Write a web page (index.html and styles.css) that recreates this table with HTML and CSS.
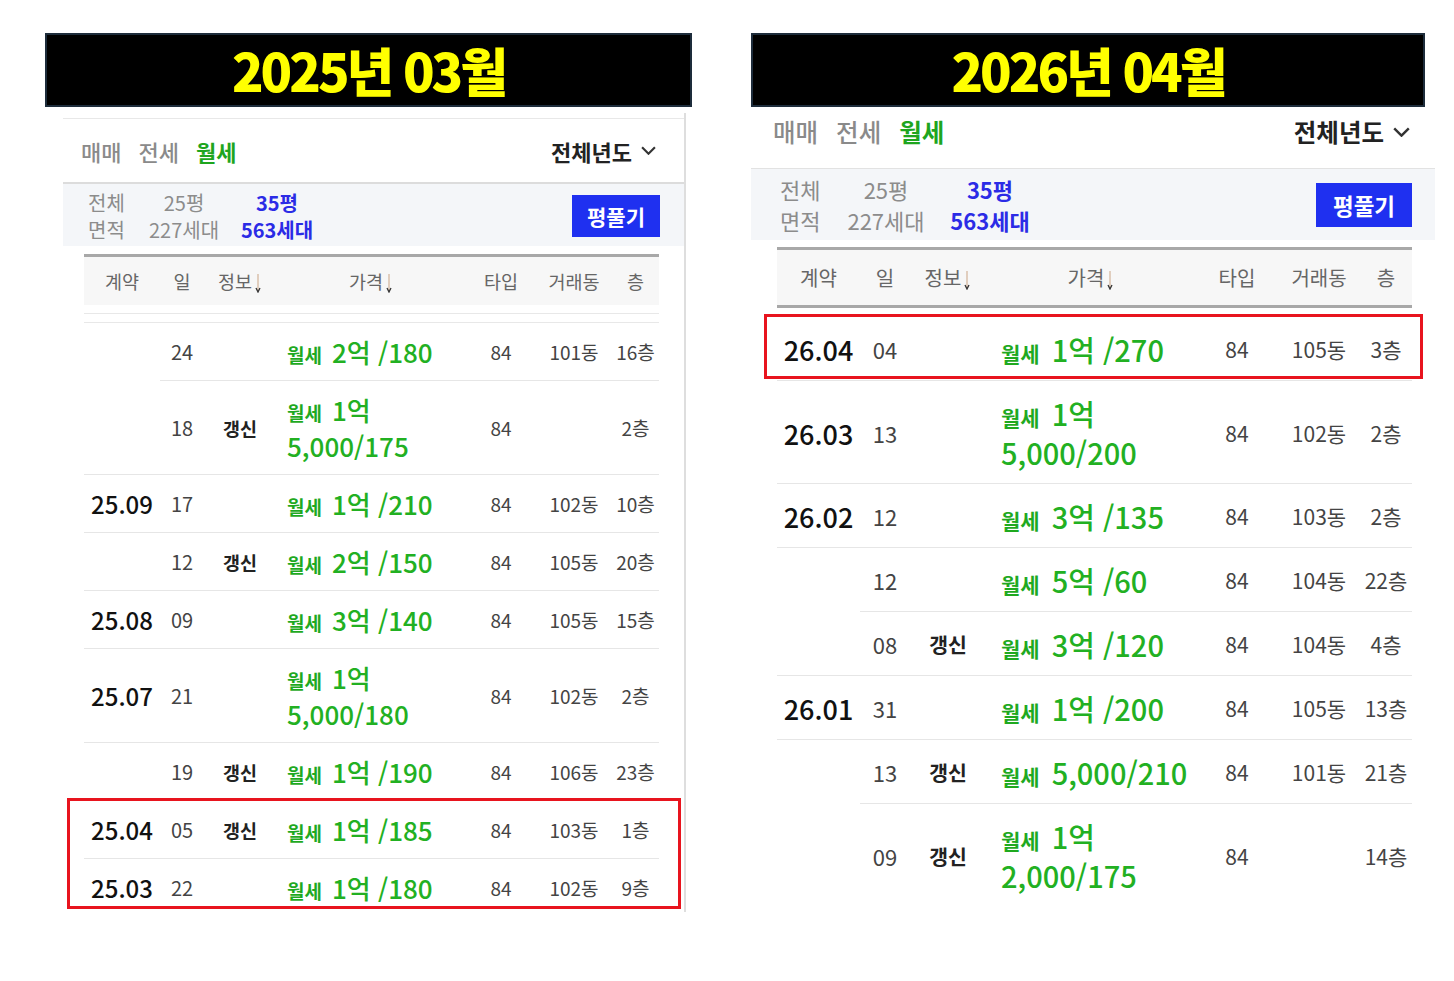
FILE: index.html
```html
<!DOCTYPE html>
<html lang="ko">
<head>
<meta charset="utf-8">
<title>월세 실거래가 비교</title>
<link rel="stylesheet" href="styles.css">
</head>
<body>
<main class="page">
  <section class="shot shot-a">
    <h1 class="title">2025년 03월</h1>
    <div class="app">
      <div class="tabs">
        <div class="deal-types"><span>매매</span><span>전세</span><span class="on">월세</span></div>
        <div class="year">전체년도<svg class="chev" viewBox="0 0 14 8"><polyline points="1,1 7,7 13,1"/></svg></div>
      </div>
      <div class="area">
        <div class="area-grid">
          <span class="lbl">전체</span><span class="opt">25평</span><span class="opt sel">35평</span>
          <span class="lbl">면적</span><span class="opt">227세대</span><span class="opt sel">563세대</span>
        </div>
        <button class="btn">평풀기</button>
      </div>
      <div class="table">
        <div class="thead">
          <span>계약</span><span>일</span>
          <span>정보<svg class="arr" viewBox="0 0 8 20"><path class="s" d="M4 1V18"/><path class="h" d="M2 15L4 19L6 15"/></svg></span>
          <span>가격<svg class="arr" viewBox="0 0 8 20"><path class="s" d="M4 1V18"/><path class="h" d="M2 15L4 19L6 15"/></svg></span>
          <span>타입</span><span>거래동</span><span>층</span>
        </div>
        <div class="cut"></div>
        <div class="tr short"><span class="m"></span><span class="d">24</span><span class="i"></span><span class="p"><b>월세</b>2억 /180</span><span class="o">84</span><span class="o">101동</span><span class="o">16층</span></div>
        <div class="tr"><span class="m"></span><span class="d">18</span><span class="i">갱신</span><span class="p"><b>월세</b>1억<br>5,000/175</span><span class="o">84</span><span class="o"></span><span class="o">2층</span></div>
        <div class="tr"><span class="m">25.09</span><span class="d">17</span><span class="i"></span><span class="p"><b>월세</b>1억 /210</span><span class="o">84</span><span class="o">102동</span><span class="o">10층</span></div>
        <div class="tr"><span class="m"></span><span class="d">12</span><span class="i">갱신</span><span class="p"><b>월세</b>2억 /150</span><span class="o">84</span><span class="o">105동</span><span class="o">20층</span></div>
        <div class="tr"><span class="m">25.08</span><span class="d">09</span><span class="i"></span><span class="p"><b>월세</b>3억 /140</span><span class="o">84</span><span class="o">105동</span><span class="o">15층</span></div>
        <div class="tr"><span class="m">25.07</span><span class="d">21</span><span class="i"></span><span class="p"><b>월세</b>1억<br>5,000/180</span><span class="o">84</span><span class="o">102동</span><span class="o">2층</span></div>
        <div class="tr"><span class="m"></span><span class="d">19</span><span class="i">갱신</span><span class="p"><b>월세</b>1억 /190</span><span class="o">84</span><span class="o">106동</span><span class="o">23층</span></div>
        <div class="hl">
          <div class="tr"><span class="m">25.04</span><span class="d">05</span><span class="i">갱신</span><span class="p"><b>월세</b>1억 /185</span><span class="o">84</span><span class="o">103동</span><span class="o">1층</span></div>
          <div class="tr last"><span class="m">25.03</span><span class="d">22</span><span class="i"></span><span class="p"><b>월세</b>1억 /180</span><span class="o">84</span><span class="o">102동</span><span class="o">9층</span></div>
        </div>
      </div>
    </div>
  </section>

  <section class="shot shot-b">
    <h1 class="title">2026년 04월</h1>
    <div class="app">
      <div class="tabs">
        <div class="deal-types"><span>매매</span><span>전세</span><span class="on">월세</span></div>
        <div class="year">전체년도<svg class="chev" viewBox="0 0 14 8"><polyline points="1,1 7,7 13,1"/></svg></div>
      </div>
      <div class="area">
        <div class="area-grid">
          <span class="lbl">전체</span><span class="opt">25평</span><span class="opt sel">35평</span>
          <span class="lbl">면적</span><span class="opt">227세대</span><span class="opt sel">563세대</span>
        </div>
        <button class="btn">평풀기</button>
      </div>
      <div class="table">
        <div class="thead">
          <span>계약</span><span>일</span>
          <span>정보<svg class="arr" viewBox="0 0 8 20"><path class="s" d="M4 1V18"/><path class="h" d="M2 15L4 19L6 15"/></svg></span>
          <span>가격<svg class="arr" viewBox="0 0 8 20"><path class="s" d="M4 1V18"/><path class="h" d="M2 15L4 19L6 15"/></svg></span>
          <span>타입</span><span>거래동</span><span>층</span>
        </div>
        <div class="cut"></div>
        <div class="hl">
          <div class="tr"><span class="m">26.04</span><span class="d">04</span><span class="i"></span><span class="p"><b>월세</b>1억 /270</span><span class="o">84</span><span class="o">105동</span><span class="o">3층</span></div>
        </div>
        <div class="tr"><span class="m">26.03</span><span class="d">13</span><span class="i"></span><span class="p"><b>월세</b>1억<br>5,000/200</span><span class="o">84</span><span class="o">102동</span><span class="o">2층</span></div>
        <div class="tr"><span class="m">26.02</span><span class="d">12</span><span class="i"></span><span class="p"><b>월세</b>3억 /135</span><span class="o">84</span><span class="o">103동</span><span class="o">2층</span></div>
        <div class="tr short"><span class="m"></span><span class="d">12</span><span class="i"></span><span class="p"><b>월세</b>5억 /60</span><span class="o">84</span><span class="o">104동</span><span class="o">22층</span></div>
        <div class="tr"><span class="m"></span><span class="d">08</span><span class="i">갱신</span><span class="p"><b>월세</b>3억 /120</span><span class="o">84</span><span class="o">104동</span><span class="o">4층</span></div>
        <div class="tr"><span class="m">26.01</span><span class="d">31</span><span class="i"></span><span class="p"><b>월세</b>1억 /200</span><span class="o">84</span><span class="o">105동</span><span class="o">13층</span></div>
        <div class="tr short"><span class="m"></span><span class="d">13</span><span class="i">갱신</span><span class="p"><b>월세</b>5,000/210</span><span class="o">84</span><span class="o">101동</span><span class="o">21층</span></div>
        <div class="tr last"><span class="m"></span><span class="d">09</span><span class="i">갱신</span><span class="p"><b>월세</b>1억<br>2,000/175</span><span class="o">84</span><span class="o"></span><span class="o">14층</span></div>
      </div>
    </div>
  </section>
</main>
</body>
</html>
```

FILE: styles.css
```css
* { box-sizing: border-box; margin: 0; padding: 0; }

html, body { background: #fff; }

body {
  font-family: "Noto Sans CJK KR", "Noto Sans", sans-serif;
  color: #333;
}

.page {
  display: flex;
  align-items: flex-start;
  padding-top: 33px;
  height: 981px;
  overflow: hidden;
}

.shot { display: flex; flex-direction: column; }

.shot-a {
  margin-left: 45px;
  width: 647px;
  --cols: 76px 44px 72px 190px 70px 76px 47px;
  --mw: 76px;
  --pt: 11px;
  --pb: 10px;
  --lh: 36px;
  --fm: 24px;
  --fd: 20px;
  --fi: 18.5px;
  --fp: 26px;
  --fpb: 19px;
  --fo: 19px;
  --fh: 18.5px;
  --pp: 11px;
}

.shot-b {
  margin-left: 59px;
  width: 684px;
  --cols: 83px 50px 76px 210px 82px 82px 52px;
  --mw: 83px;
  --pt: 13px;
  --pb: 11px;
  --lh: 39px;
  --fm: 27px;
  --fd: 22px;
  --fi: 20.5px;
  --fp: 29px;
  --fpb: 21px;
  --fo: 21px;
  --fh: 20px;
  --pp: 15px;
}

/* ---------- title bar ---------- */
.title {
  height: 74px;
  background: #000;
  border: 2px solid #1d2c3b;
  color: #ffff00;
  font-family: "Noto Sans CJK KR", sans-serif;
  font-weight: 900;
  font-size: 52px;
  letter-spacing: -3px;
  line-height: 1;
  display: flex;
  align-items: center;
  justify-content: center;
}

.shot-b .title { width: 674px; }

/* ---------- app panel ---------- */
.shot-a .app {
  margin-top: 6px;
  margin-left: 18px;
  width: 623px;
  padding-top: 5px;
  border-right: 2px solid #dedede;
  height: 799px;
}

.shot-b .app { width: 684px; }

/* tabs */
.tabs {
  display: flex;
  align-items: center;
  justify-content: space-between;
}

.shot-a .tabs {
  height: 66px;
  border-top: 1px solid #e8e8e8;
  border-bottom: 2px solid #dcdcdc;
  padding: 0 28px 0 18px;
  font-size: 22px;
}

.shot-b .tabs {
  height: 62px;
  border-bottom: 1px solid #e2e2e2;
  padding: 0 25px 12px 22px;
  font-size: 24.5px;
}

.deal-types { display: flex; gap: 17px; color: #8a8a8a; font-weight: 500; }
.shot-b .deal-types { gap: 18px; }
.deal-types .on { color: #1ea51e; font-weight: 700; }

.year {
  display: flex;
  align-items: center;
  gap: 9px;
  font-weight: 700;
  color: #222;
}

.chev { width: 15px; height: 9px; }
.shot-b .chev { width: 17px; height: 10px; }
.chev polyline { fill: none; stroke: #333; stroke-width: 2; }

/* area */
.area {
  display: flex;
  align-items: center;
  justify-content: space-between;
  background: #f4f6f9;
}

.shot-a .area { height: 62px; padding: 2px 24px 0 25px; }
.shot-b .area { height: 71px; padding: 0 23px 0 29px; }

.area-grid {
  display: grid;
  color: #8c8c8c;
}

.shot-a .area-grid {
  grid-template-columns: 48px 96px 90px;
  font-size: 20px;
  line-height: 27px;
}

.shot-b .area-grid {
  grid-template-columns: 54px 104px 104px;
  font-size: 22px;
  line-height: 31px;
}

.area-grid .opt { text-align: center; }
.area-grid .sel { color: #2b2be6; font-weight: 700; }

.btn {
  border: none;
  background: #1f30f0;
  color: #fff;
  font-family: inherit;
  font-weight: 700;
}

.shot-a .btn { width: 88px; height: 42px; font-size: 21px; }
.shot-b .btn { width: 96px; height: 44px; font-size: 22.5px; }

/* ---------- table ---------- */
.shot-a .table { margin: 8px 0 0 21px; width: 575px; }
.shot-b .table { margin: 7px 0 0 26px; width: 635px; }

.thead, .tr {
  display: grid;
  grid-template-columns: var(--cols);
  align-items: center;
}

.thead {
  background: #f7f7f7;
  border-top: 3px solid #a8a8a8;
  color: #666;
  font-size: var(--fh);
  text-align: center;
}

.shot-a .thead { height: 51px; }
.shot-b .thead { height: 61px; border-bottom: 3px solid #a8a8a8; }

.arr { width: 8px; height: 20px; margin-left: 2px; vertical-align: -4px; }
.arr .s { stroke: #d6b8a0; stroke-width: 1.3; fill: none; }
.arr .h { stroke: #333; stroke-width: 1.3; fill: none; }

.shot-a .cut {
  margin-top: 8px;
  height: 10px;
  border-top: 1px solid #e8e8e8;
  border-bottom: 1px solid #e8e8e8;
}

.shot-b .cut { height: 9px; }

.tr {
  padding: var(--pt) 0 var(--pb);
  border-bottom: 1px solid #e6e6e6;
  text-align: center;
}

.tr > span { line-height: var(--lh); }

.tr.short {
  border-bottom: none;
  padding-bottom: calc(var(--pb) + 1px);
  background: linear-gradient(#e6e6e6, #e6e6e6) no-repeat;
  background-position: var(--mw) 100%;
  background-size: calc(100% - var(--mw)) 1px;
}

.tr.last { border-bottom: none; }

.m { font-size: var(--fm); color: #111; font-weight: 500; }
.d { font-size: var(--fd); color: #444; }
.i { font-size: var(--fi); color: #222; font-weight: 700; }
.o { font-size: var(--fo); color: #444; }

.p {
  text-align: left;
  padding-left: var(--pp);
  color: #22b022;
  font-size: var(--fp);
  font-weight: 500;
}

.p b {
  font-size: var(--fpb);
  line-height: 1;
  font-weight: 700;
  color: #1fa91f;
  margin-right: 10px;
}

.shot-b .p b { margin-right: 12px; }

/* highlight box drawn over the rows */
.hl { position: relative; }

.hl::after {
  content: "";
  position: absolute;
  border: 3px solid #e8141e;
  pointer-events: none;
}

.shot-a .hl::after { top: -3px; bottom: 7px; left: -17px; right: -22px; }
.shot-b .hl::after { top: -3px; bottom: 2px; left: -13px; right: -11px; }
```
